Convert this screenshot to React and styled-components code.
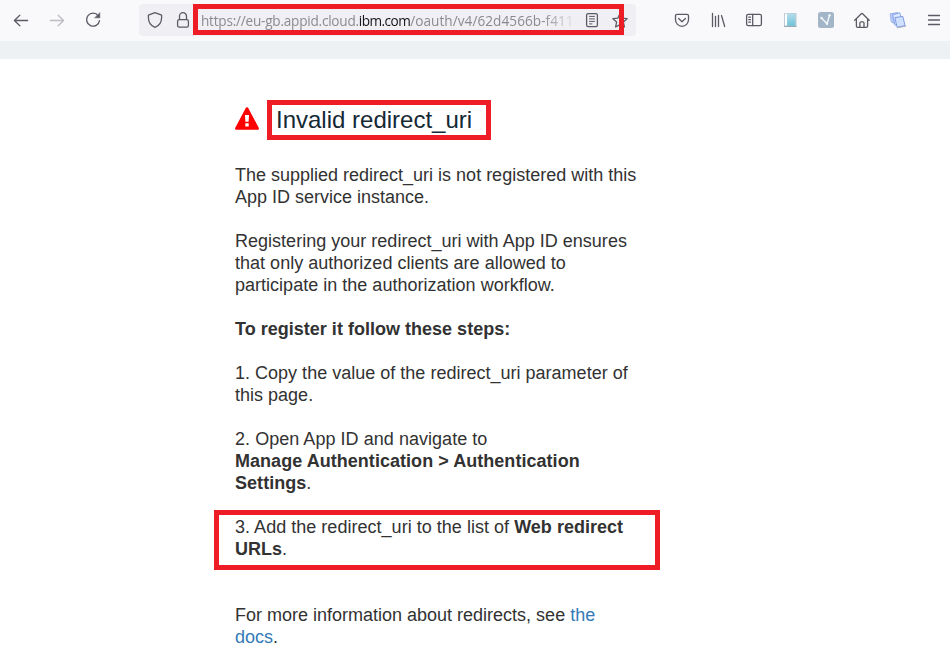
import React from "react";
import styled, { createGlobalStyle } from "styled-components";

const GlobalStyle = createGlobalStyle`
  *, *::before, *::after { box-sizing: border-box; }
  html, body { margin: 0; background: #fff; overflow: hidden; }
`;

const Window = styled.div`
  height: 655px;
  display: flex;
  flex-direction: column;
  overflow: hidden;
  background: #fff;
`;

const Toolbar = styled.header`
  flex: none;
  display: flex;
  height: 41px;
  padding: 0 0 1px 3px;
  align-items: center;
  overflow: hidden;
  background: #f9f9fb;
`;

const IconButton = styled.button`
  flex: none;
  width: ${(p) => p.$width || 36}px;
  height: 32px;
  padding: 0;
  border: 0;
  background: none;
  display: flex;
  align-items: center;
  justify-content: center;
  color: ${(p) => (p.$muted ? "#bdbdc2" : "#5b5b66")};
`;

const Glyph = styled.svg`
  display: block;
  flex: none;
  width: 24px;
  height: 24px;
  fill: none;
  stroke: currentColor;
  stroke-width: 1.3;
  stroke-linecap: round;
  stroke-linejoin: round;
`;

const AddressBar = styled.div`
  flex: none;
  position: relative;
  display: flex;
  align-items: center;
  width: 497px;
  height: 32px;
  margin: 0 28px;
  padding-left: 2px;
  border-radius: 4px;
  background: #f0f0f4;
`;

const Address = styled.div`
  flex: none;
  width: 381px;
  padding: 2px 0 0 4px;
  white-space: nowrap;
  font: 13.6px/20px "Open Sans", sans-serif;
  color: #8a8a90;
  mask-image: linear-gradient(to right, #000 345px, transparent 381px);
`;

const UrlPart = styled.span`
  letter-spacing: ${(p) => p.$tracking}px;
  color: ${(p) => (p.$strong ? "#15141a" : "inherit")};
`;

const Outline = styled.span`
  position: absolute;
  inset: ${(p) => p.$inset};
  border: 5px solid #ee1c25;
  pointer-events: none;
`;

const Banner = styled.div`
  flex: none;
  height: 18px;
  background: #edf1f4;
`;

const Article = styled.main`
  width: 430px;
  margin-left: 235px;
  padding-top: 41px;
  font: 18px/22px "Liberation Sans", Arial, sans-serif;
  color: #323232;
`;

const TitleRow = styled.div`
  display: flex;
  height: 40px;
  margin-bottom: 24px;
`;

const WarningIcon = styled.svg`
  width: 24px;
  height: 24px;
  margin: 7px 8px 0 0;
`;

const Title = styled.h1`
  position: relative;
  width: 224px;
  margin: 0;
  padding-left: 9px;
  font-size: 24px;
  font-weight: 400;
  line-height: 40px;
  white-space: nowrap;
  color: #152935;
`;

const Paragraph = styled.p`
  position: relative;
  margin: 0 0 ${(p) => p.$after || 22}px;
  white-space: nowrap;
  letter-spacing: ${(p) => p.$tracking || 0}px;
`;

const Link = styled.a`
  color: #337ab7;
  text-decoration: none;
`;

const Icon = ({ children, ...rest }) => (
  <IconButton {...rest}>
    <Glyph viewBox="0 0 24 24">{children}</Glyph>
  </IconButton>
);

export default function App() {
  return (
    <Window>
      <GlobalStyle />
      <Toolbar>
        <Icon aria-label="Back">
          <path d="M10.8 7.2 5.4 12.5l5.4 5.3M5.6 12.5H18.6" />
        </Icon>
        <Icon aria-label="Forward" $muted>
          <path d="M13.2 7.2 18.6 12.5l-5.4 5.3M18.4 12.5H5.4" />
        </Icon>
        <Icon aria-label="Reload">
          <path d="M17.3 7.8A6.5 6.5 0 1 0 18.5 12.6" />
          <path d="M18.8 5v4.8H14z" fill="currentColor" strokeWidth="0.6" />
        </Icon>
        <AddressBar>
          <Icon aria-label="Tracking protection" $width={28}>
            <path d="M12 4.7 18.6 7.2v2.2c0 4.6-2.7 8.3-6.6 10-3.9-1.7-6.6-5.4-6.6-10V7.2z" />
          </Icon>
          <Icon aria-label="Secure connection" $width={28}>
            <rect x="6.6" y="11.6" width="10.8" height="7.6" rx="1.6" />
            <path d="M8.5 11.5V8.2a3.5 3.5 0 0 1 7 0v3.3" />
          </Icon>
          <Address>
            <UrlPart $tracking={-0.23}>https://eu-gb.appid.cloud.</UrlPart>
            <UrlPart $tracking={-0.55} $strong>ibm.com</UrlPart>
            <UrlPart $tracking={0.05}>/oauth/v4/62d4566b-f411</UrlPart>
          </Address>
          <Icon aria-label="Reader view" $width={28}>
            <rect x="6.6" y="5.6" width="10.8" height="13" rx="1.6" />
            <path d="M9.5 8.4h5M9.5 10.9h5M9.5 13.4h5M9.5 15.9h2.500" strokeWidth="1" />
          </Icon>
          <Icon aria-label="Bookmark" $width={28}>
            <path d="m12 5.6 2.1 4.5 5 .6-3.7 3.4 1 4.9-4.4-2.4L7.6 19l1-4.9L4.9 10.7l5-.6z" />
          </Icon>
          <Outline $inset="0 12px 1px 54px" />
        </AddressBar>
        <Icon aria-label="Pocket">
          <path d="M7 6.3h10a1.5 1.5 0 0 1 1.5 1.5v4a6.5 6.5 0 0 1-13 0v-4A1.5 1.5 0 0 1 7 6.3z" />
          <path d="m8.6 10.5 3.4 3.2 3.4-3.2" />
        </Icon>
        <Icon aria-label="Library">
          <path d="M6.5 5.5v13M9.5 8.5v10M12.5 7.5v11M15.5 7.5l3.2 11" />
        </Icon>
        <Icon aria-label="Sidebars">
          <rect x="4.6" y="6.4" width="14.8" height="11.2" rx="1.7" />
          <path d="M10.7 6.5v11M6.8 9.2h1.7M6.8 11.7h1.7M6.8 14.2h1.7" />
        </Icon>
        <Icon aria-label="Notebook">
          <defs>
            <linearGradient id="notebookCover" x1="0" y1="0" x2="0" y2="1">
              <stop offset="0" stopColor="#b4dcea" />
              <stop offset="1" stopColor="#70c4da" />
            </linearGradient>
          </defs>
          <rect x="6" y="5" width="12.5" height="13.7" rx="0.6" fill="#bccad3" stroke="none" />
          <rect x="7" y="5.7" width="2.2" height="12" fill="#fbfdff" stroke="none" />
          <rect x="9.2" y="5.7" width="8.1" height="12" fill="url(#notebookCover)" stroke="none" />
          <path d="M6.5 18.4h11.500" stroke="#879fac" strokeWidth="0.9" />
        </Icon>
        <Icon aria-label="Vimium">
          <rect x="4" y="4" width="16" height="16" rx="2.5" fill="#a3b6c8" stroke="none" />
          <path d="m7.500 10 5.500 5.800 2.500-8.300" stroke="#f4f7fa" strokeWidth="1.4" />
          <circle cx="7.5" cy="10" r="1.2" fill="#f4f7fa" stroke="none" />
          <circle cx="13" cy="15.800" r="1.2" fill="#f4f7fa" stroke="none" />
          <circle cx="15.600" cy="7.300" r="1.2" fill="#f4f7fa" stroke="none" />
        </Icon>
        <Icon aria-label="Home">
          <path d="m4.7 12.3 6.6-6.6a.9.9 0 0 1 1.3 0l6.6 6.6M6.4 11v7a1.3 1.3 0 0 0 1.3 1.3h8.6a1.3 1.3 0 0 0 1.3-1.3v-7M9.9 19v-4a1.2 1.2 0 0 1 1.2-1.2h1.7A1.2 1.2 0 0 1 14 15v4" />
        </Icon>
        <Icon aria-label="Copy tabs">
          <path d="m4.500 5.800 7-1.300 1.500 8.500-4.500 2.500-3-1.500z" fill="#b5caf8" stroke="#7e9be2" strokeWidth="0.7" />
          <path d="m7 6.800 6.800-2 2.800 9-7.300 3.400z" fill="#dce8ff" stroke="#7895e2" strokeWidth="0.8" />
          <path d="m9.300 9.600 7.500-1.200 2.300 9.200-7.700 1.600z" fill="#d0e1ff" stroke="#6785dc" strokeWidth="0.8" />
          <path d="m12 19.700 7.700-1.500" stroke="#9a9ca5" strokeWidth="0.7" />
        </Icon>
        <Icon aria-label="Menu">
          <path d="M6.5 7.5h11M6.5 12h11M6.5 16.5h11" />
        </Icon>
      </Toolbar>
      <Banner />
      <Article>
        <TitleRow>
          <WarningIcon viewBox="0 0 24 24">
            <path
              d="M10.6 1.200 .3 20.800A1.300 1.300 0 0 0 1.400 22.800h21.200a1.300 1.300 0 0 0 1.100-2L13.400 1.200a1.600 1.600 0 0 0-2.800 0z"
              fill="#fe0000"
            />
            <path d="M10 8h4l-.4 6.700h-3.200zM10.300 16.200h3.400v3.200h-3.400z" fill="#fff" />
          </WarningIcon>
          <Title>
            Invalid redirect_uri
            <Outline $inset="0" />
          </Title>
        </TitleRow>
        <Paragraph>
          The supplied redirect_uri is not registered with this
          <br />
          App ID service instance.
        </Paragraph>
        <Paragraph $tracking={0.015}>
          Registering your redirect_uri with App ID ensures
          <br />
          that only authorized clients are allowed to
          <br />
          participate in the authorization workflow.
        </Paragraph>
        <Paragraph $tracking={0.015}>
          <strong>To register it follow these steps:</strong>
        </Paragraph>
        <Paragraph $tracking={0.01}>
          1. Copy the value of the redirect_uri parameter of
          <br />
          this page.
        </Paragraph>
        <Paragraph $tracking={0.04}>
          2. Open App ID and navigate to
          <br />
          <strong>
            Manage Authentication &gt; Authentication
            <br />
            Settings
          </strong>
          .
        </Paragraph>
        <Paragraph $after={44} $tracking={0.025}>
          3. Add the redirect_uri to the list of <strong>Web redirect</strong>
          <br />
          <strong>URLs</strong>.
          <Outline $inset="-6px 5px -10px -21px" />
        </Paragraph>
        <Paragraph>
          For more information about redirects, see{" "}
          <Link>
            the
            <br />
            docs
          </Link>
          .
        </Paragraph>
      </Article>
    </Window>
  );
}
